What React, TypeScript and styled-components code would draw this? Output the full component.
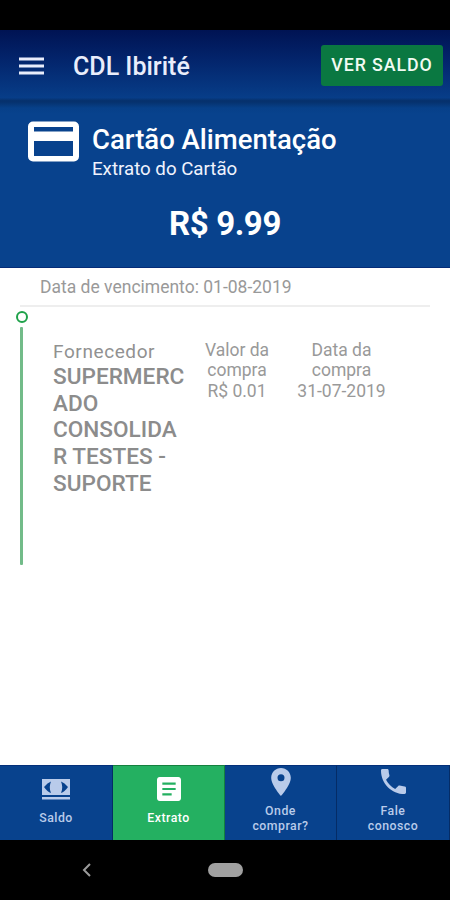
import React from "react";
import styled, { createGlobalStyle } from "styled-components";

const GlobalStyle = createGlobalStyle`
  * { box-sizing: border-box; }
  html, body { margin: 0; background: #000; }
  button { font: inherit; border: 0; cursor: pointer; }
`;

const Screen = styled.div`
  width: 450px;
  height: 900px;
  display: flex;
  flex-direction: column;
  overflow: hidden;
  background: #fff;
  font-family: Roboto, "Liberation Sans", sans-serif;
`;

const StatusBar = styled.div`
  height: 30px;
  flex: none;
  background: #000;
`;

const Toolbar = styled.header`
  height: 72px;
  flex: none;
  display: flex;
  align-items: center;
  padding: 0 7px 1px 19px;
  background: linear-gradient(#001353 0%, #03246b 40%, #073d88 94%, #06316d 98%, #06316d 100%);
`;

const IconButton = styled.button`
  display: flex;
  padding: 0;
  background: none;
  color: #e9edfb;
`;

const Title = styled.h1`
  flex: 1;
  margin: 2px 0 0 29px;
  color: #e9edfb;
  font-size: 25px;
  line-height: 30px;
  font-weight: 500;
`;

const BalanceButton = styled.button`
  width: 122px;
  height: 41px;
  padding: 0 0 2px;
  border-radius: 3px;
  background: #0a7841;
  color: #f1fbf3;
  font-size: 17.8px;
  font-weight: 500;
  letter-spacing: 0.9px;
`;

const Summary = styled.section`
  height: 166px;
  flex: none;
  padding: 19px 28px 0;
  background: linear-gradient(#06316d 0, #074089 6px, #08428d 12px);
  border-bottom: 1px solid #052c78;
  color: #fff;
`;

const CardHeading = styled.div`
  display: flex;
  gap: 13px;
`;

const CardName = styled.h2`
  margin: 3px 0 0;
  font-size: 27.5px;
  line-height: 32px;
  font-weight: 500;
`;

const CardSubtitle = styled.div`
  margin-top: 1px;
  font-size: 18.7px;
  line-height: 24px;
  color: #f0f3fd;
`;

const Amount = styled.div`
  margin-top: 24px;
  text-align: center;
  font-size: 33px;
  line-height: 38px;
  font-weight: 700;
  letter-spacing: -0.4px;
`;

const Statement = styled.main`
  flex: 1;
  padding: 0 15px;
  color: #999;
`;

const DueDate = styled.div`
  height: 39px;
  margin: 0 5px;
  padding: 8px 0 0 20px;
  border-bottom: 2px solid #eee;
  font-size: 17.5px;
  line-height: 22px;
`;

const Entry = styled.article`
  display: flex;
  padding-top: 4px;
`;

const Timeline = styled.div`
  width: 13px;
  flex: none;
  display: flex;
  flex-direction: column;
  align-items: center;
  gap: 4px;
`;

const TimelineDot = styled.i`
  width: 12px;
  height: 12px;
  border: 2.5px solid #1fa24a;
  border-radius: 50%;
`;

const TimelineBar = styled.i`
  width: 3px;
  height: 238px;
  border-radius: 1px;
  background: #72bb89;
`;

const Supplier = styled.div`
  width: 136px;
  margin: 30px 0 0 25px;
`;

const SupplierLabel = styled.div`
  color: #919191;
  font-size: 19px;
  line-height: 22px;
  letter-spacing: 0.6px;
`;

const SupplierName = styled.div`
  width: 134px;
  margin-top: 1px;
  color: #8c8c8c;
  font-size: 22.6px;
  line-height: 26.7px;
  font-weight: 500;
  overflow-wrap: break-word;
`;

const Detail = styled.div<{ $width: number }>`
  width: ${(p) => p.$width}px;
  margin-top: 29px;
  text-align: center;
  white-space: pre-line;
  font-size: 17.5px;
  line-height: 20.3px;
`;

const Tabs = styled.nav`
  height: 75px;
  flex: none;
  display: grid;
  grid-template-columns: 113px 112px 112px 113px;
`;

const Tab = styled.button<{ $active?: boolean; $bottom: number }>`
  display: flex;
  flex-direction: column;
  align-items: center;
  justify-content: flex-end;
  padding: 0 0 ${(p) => p.$bottom}px;
  border-top: 1px solid ${(p) => (p.$active ? "#14803f" : "#04307a")};
  border-right: 1px solid ${(p) => (p.$active ? "#14803f" : "#052c66")};
  background: ${(p) => (p.$active ? "#24b061" : "#08428d")};
  color: ${(p) => (p.$active ? "#fff" : "#b9cbea")};
`;

const TabIcon = styled.span<{ $gap: number }>`
  display: flex;
  margin-bottom: ${(p) => p.$gap}px;
`;

const TabLabel = styled.span`
  font-size: 12.3px;
  line-height: 14.5px;
  font-weight: 500;
  letter-spacing: 0.5px;
  white-space: pre-line;
`;

const SystemBar = styled.footer`
  height: 60px;
  flex: none;
  display: grid;
  grid-template-columns: 82px 126px 1fr;
  align-items: center;
  background: #000;
`;

const HomePill = styled.div`
  width: 35px;
  height: 14px;
  border-radius: 7px;
  background: #a0a0a0;
`;

const MenuIcon = () => (
  <svg width="25" height="18" fill="currentColor">
    <path d="M0 0.500h25v3H0zM0 7.500h25v3H0zM0 14.500h25v3H0z" />
  </svg>
);

const CardIcon = () => (
  <svg width="51" height="41" fill="currentColor">
    <path
      fillRule="evenodd"
      d="M5 0.500h41a5 5 0 0 1 5 5v30a5 5 0 0 1-5 5H5a5 5 0 0 1-5-5v-30a5 5 0 0 1 5-5zM6 6v4.500h39V6zM6 20v15h39V20z"
    />
  </svg>
);

const CashIcon = () => (
  <svg width="28" height="21" fill="currentColor">
    <path
      fillRule="evenodd"
      d="M0 0h28v16H0zM9 2.500Q5.500 3.500 2 8Q5.500 13 9 14Q6.500 8.300 9 2.500zM19 2.500Q21.500 8.300 19 14Q22.500 13 26 8Q22.500 3.500 19 2.500z"
    />
    <path d="M0 18h28v2.500H0z" />
  </svg>
);

const ArticleIcon = () => (
  <svg width="24" height="24" viewBox="3 3 18 18" fill="currentColor">
    <path d="M19 3H5c-1.100 0-2 .9-2 2v14c0 1.100.9 2 2 2h14c1.100 0 2-.9 2-2V5c0-1.100-.9-2-2-2zm-5 13.800H7v-1.600h7v1.600zm3-4H7v-1.600h10v1.600zm0-4H7V7.200h10v1.600z" />
  </svg>
);

const PinIcon = () => (
  <svg width="20" height="28" viewBox="5 2 14 20" fill="currentColor">
    <path d="M12 2C8.130 2 5 5.130 5 9c0 5.250 7 13 7 13s7-7.750 7-13c0-3.870-3.130-7-7-7zm0 9.500a2.500 2.500 0 0 1 0-5 2.500 2.500 0 0 1 0 5z" />
  </svg>
);

const PhoneIcon = () => (
  <svg width="25" height="25" viewBox="3 3 18 18" fill="currentColor">
    <path d="M6.620 10.790c1.440 2.830 3.760 5.140 6.590 6.590l2.200-2.200c.27-.27.67-.36 1.020-.24 1.120.37 2.330.57 3.570.57.55 0 1 .45 1 1V20c0 .55-.45 1-1 1-9.390 0-17-7.610-17-17 0-.55.45-1 1-1h3.500c.55 0 1 .45 1 1 0 1.250.2 2.450.57 3.570.11.35.03.74-.25 1.020l-2.200 2.200z" />
  </svg>
);

const BackIcon = () => (
  <svg width="9" height="14" fill="none" stroke="#9b9b9b" strokeWidth="2">
    <path d="M8 1L2 7l6 6" />
  </svg>
);

const tabs = [
  { label: "Saldo", icon: <CashIcon />, gap: 11, bottom: 15 },
  { label: "Extrato", icon: <ArticleIcon />, gap: 10, bottom: 15, active: true },
  { label: "Onde\ncomprar?", icon: <PinIcon />, gap: 8, bottom: 7 },
  { label: "Fale\nconosco", icon: <PhoneIcon />, gap: 10, bottom: 7 },
];

export default function App() {
  return (
    <Screen>
      <GlobalStyle />
      <StatusBar />
      <Toolbar>
        <IconButton aria-label="Menu">
          <MenuIcon />
        </IconButton>
        <Title>CDL Ibirité</Title>
        <BalanceButton>VER SALDO</BalanceButton>
      </Toolbar>
      <Summary>
        <CardHeading>
          <CardIcon />
          <div>
            <CardName>Cartão Alimentação</CardName>
            <CardSubtitle>Extrato do Cartão</CardSubtitle>
          </div>
        </CardHeading>
        <Amount>R$ 9.99</Amount>
      </Summary>
      <Statement>
        <DueDate>Data de vencimento: 01-08-2019</DueDate>
        <Entry>
          <Timeline>
            <TimelineDot />
            <TimelineBar />
          </Timeline>
          <Supplier>
            <SupplierLabel>Fornecedor</SupplierLabel>
            <SupplierName>SUPERMERCADO CONSOLIDAR TESTES - SUPORTE</SupplierName>
          </Supplier>
          <Detail $width={96}>{"Valor da\ncompra\nR$ 0.01"}</Detail>
          <Detail $width={113}>{"Data da\ncompra\n31-07-2019"}</Detail>
        </Entry>
      </Statement>
      <Tabs>
        {tabs.map((tab) => (
          <Tab key={tab.label} $active={tab.active} $bottom={tab.bottom}>
            <TabIcon $gap={tab.gap}>{tab.icon}</TabIcon>
            <TabLabel>{tab.label}</TabLabel>
          </Tab>
        ))}
      </Tabs>
      <SystemBar>
        <span />
        <BackIcon />
        <HomePill />
      </SystemBar>
    </Screen>
  );
}
